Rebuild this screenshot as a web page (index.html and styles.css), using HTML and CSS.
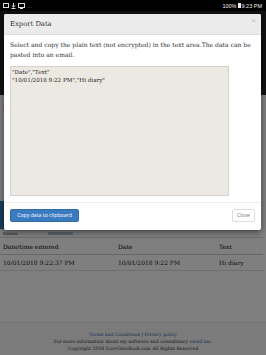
FILE: index.html
```html
<!DOCTYPE html>
<html>
<head>
<meta charset="utf-8">
<link rel="stylesheet" href="styles.css">
</head>
<body>
<div class="statusbar">
  <div class="sb-icons">
    <svg width="6" height="5" viewBox="0 0 6 5"><rect x="0.5" y="0.5" width="5" height="4" fill="none" stroke="#ddd" stroke-width="1"/></svg>
    <svg width="5" height="6" viewBox="0 0 5 6"><path d="M2.5 0v4M0.8 2.5l1.7 1.7 1.7-1.7M0.5 5.5h4" fill="none" stroke="#ddd" stroke-width="1"/></svg>
    <svg width="7" height="6" viewBox="0 0 7 6"><rect x="0.5" y="0.5" width="6" height="4" fill="none" stroke="#ddd"/><path d="M2 5.5h3" stroke="#ddd"/></svg>
    <span class="sb-dots">…</span>
  </div>
  <div class="sb-right">100% <span class="batt"></span> 9:23 PM</div>
</div>
<div class="page">
  <div class="navbar"></div>
  <div class="content">
    <h2 class="title">Diary</h2>
    <div class="btn-bar"></div>
    <div class="entries-row"><span class="entries">Entries</span><span class="mini-link"></span></div>
    <table class="entries-table">
      <thead>
        <tr><th>Date/time entered</th><th>Date</th><th>Text</th></tr>
      </thead>
      <tbody>
        <tr><td>10/01/2018 9:22:37 PM</td><td>10/01/2018 9:22 PM</td><td>Hi diary</td></tr>
      </tbody>
    </table>
  </div>
  <footer class="footer">
    <div><a>Terms and Conditions</a> | <a>Privacy policy</a></div>
    <div>For more information about my software and consultancy <a>email me</a>.</div>
    <div>Copyright 2018 CoreGateBook.com All Rights Reserved</div>
  </footer>
</div>
<div class="overlay"></div>
<div class="modal">
  <div class="modal-header">
    <span class="modal-title">Export Data</span>
    <span class="close-x">×</span>
  </div>
  <div class="modal-body">
    <p class="intro">Select and copy the plain text (not encrypted) in the text area.The data can be pasted into an email.</p>
    <div class="textarea">"Date","Text"<br>"10/01/2018 9:22 PM","Hi diary"</div>
  </div>
  <div class="modal-footer">
    <button class="btn-primary">Copy data to clipboard</button>
    <button class="btn-default">Close</button>
  </div>
</div>
</body>
</html>
```
FILE: styles.css
```css
* { box-sizing: border-box; }
html, body { margin: 0; padding: 0; }
body {
  width: 266px;
  height: 355px;
  overflow: hidden;
  position: relative;
  background: #fff;
  font-family: "DejaVu Serif", serif;
  color: #333;
}
.statusbar {
  height: 11px;
  background: #000;
  display: flex;
  justify-content: space-between;
  align-items: center;
  padding: 0 4px 0 3px;
  position: relative;
  z-index: 3;
}
.sb-icons { display: flex; gap: 2px; align-items: center; }
.sb-dots { color: #aaa; font-size: 5px; font-family: "Liberation Sans", sans-serif; }
.sb-right {
  color: #eee;
  font-family: "Liberation Sans", sans-serif;
  font-size: 5.5px;
  display: flex;
  align-items: center;
  gap: 1px;
}
.batt { display: inline-block; width: 3px; height: 5px; background: #eee; }
.page { display: flex; flex-direction: column; height: 344px; }
.navbar { height: 84px; background: #222; flex: none; }
.content { flex: 1; padding: 8px 0 0 3px; }
.title { margin: 0; font-size: 10px; font-weight: normal; height: 98px; color: #333; }
.btn-bar { height: 28px; width: 80px; background: #337ab7; margin-left: -3px; }
.entries-row { height: 8px; display: flex; align-items: center; gap: 30px; }
.entries { font-size: 4px; color: #333; }
.mini-link { width: 25px; height: 3px; background: #bcd; }
.entries-table {
  border-collapse: collapse;
  width: 263px;
  font-size: 6px;
  color: #111;
  margin-left: -3px;
}
.entries-table th, .entries-table td {
  text-align: left;
  padding: 0 3px;
  border-top: 1px solid #ddd;
}
.entries-table th { height: 17px; font-weight: normal; border-bottom: 1px solid #ccc; color: #000; }
.entries-table td { height: 16px; border-bottom: 1px solid #ddd; }
.entries-table th:nth-child(1) { width: 115px; }
.entries-table th:nth-child(2) { width: 101px; }
.footer {
  height: 33px;
  background: #f6f6f6;
  border-top: 1px solid #e5e5e5;
  font-size: 4.6px;
  text-align: center;
  color: #333;
  padding-top: 8px;
  line-height: 7px;
}
.footer a { color: #2a6ab0; }
.overlay {
  position: absolute;
  left: 0; right: 0; top: 11px; bottom: 0;
  background: rgba(0,0,0,0.5);
  z-index: 1;
}
.modal {
  position: absolute;
  left: 4px;
  top: 14px;
  width: 257px;
  height: 216px;
  background: #fff;
  border-radius: 2px;
  box-shadow: 0 2px 6px rgba(0,0,0,0.5);
  z-index: 2;
  display: flex;
  flex-direction: column;
  overflow: hidden;
}
.modal-header {
  height: 21px;
  background: #ebebeb;
  border-bottom: 1px solid #ddd;
  display: flex;
  align-items: center;
  justify-content: space-between;
  padding: 0 5px 0 6px;
  flex: none;
}
.modal-title { font-size: 6.8px; color: #333; }
.close-x { font-size: 8px; color: #bbb; font-family: "Liberation Sans", sans-serif; align-self: flex-start; margin-top: 2px; }
.modal-body { padding: 5px 6px 0 6px; flex: none; }
.intro { margin: 0; font-size: 6.05px; line-height: 9.5px; color: #333; }
.textarea {
  margin-top: 7px;
  width: 219px;
  height: 130px;
  background: #ece9e3;
  border: 1px solid #d4d2cc;
  font-size: 5.6px;
  line-height: 8px;
  padding: 1px 1px;
  color: #222;
}
.modal-footer {
  margin-top: auto;
  border-top: 1px solid #eee;
  height: 28px;
  display: flex;
  justify-content: space-between;
  align-items: center;
  padding: 0 6px 3px 6px;
}
.btn-primary {
  height: 13px;
  width: 69px;
  background: #3a7bc0;
  border: 1px solid #2e6da4;
  border-radius: 2px;
  color: #fff;
  font-family: "Open Sans", sans-serif;
  font-size: 5.2px;
  padding: 0;
}
.btn-default {
  height: 13px;
  width: 23px;
  background: #fff;
  border: 1px solid #ddd;
  border-radius: 2px;
  color: #777;
  font-family: "Open Sans", sans-serif;
  font-size: 5.2px;
  padding: 0;
}
```
